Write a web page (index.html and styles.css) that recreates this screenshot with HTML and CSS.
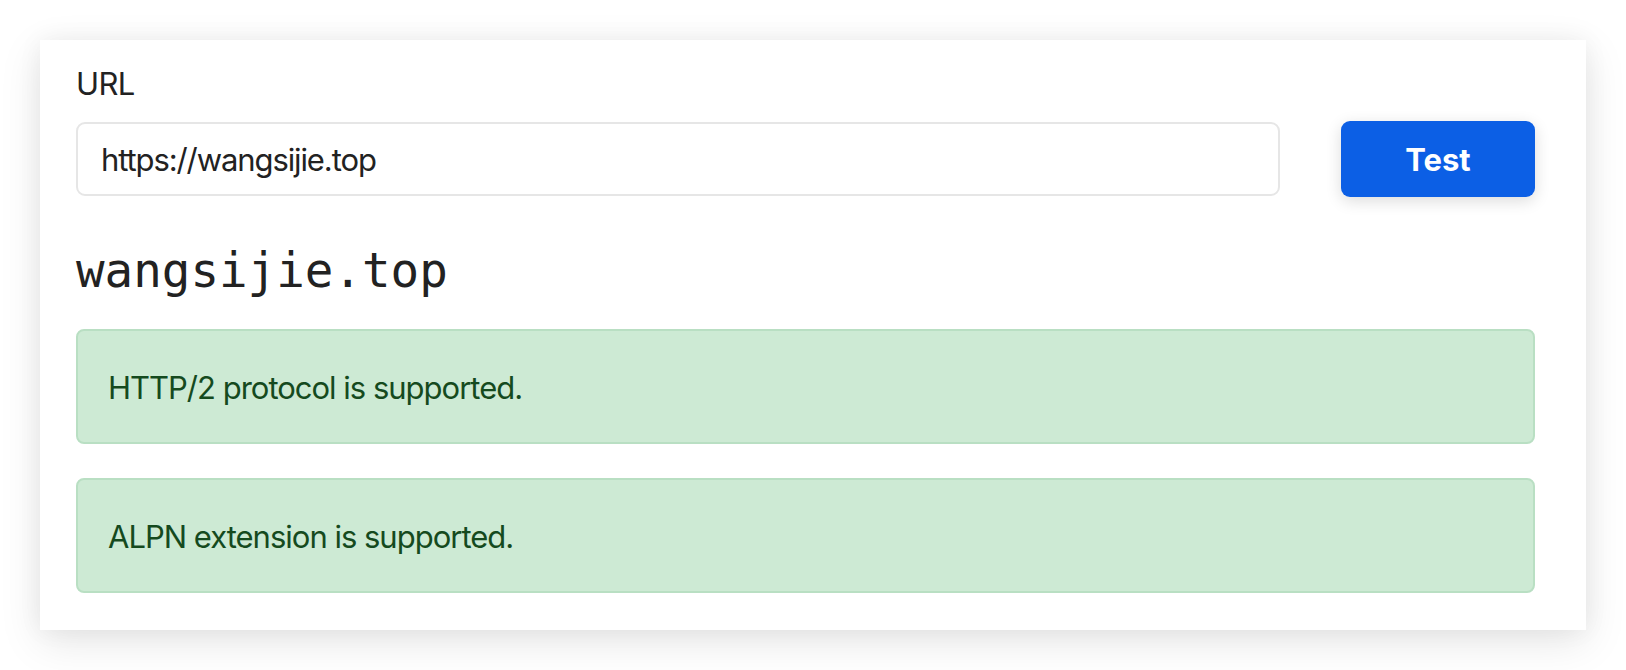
FILE: index.html
```html
<!DOCTYPE html>
<html lang="en">
<head>
<meta charset="utf-8">
<title>HTTP/2 Test</title>
<link rel="stylesheet" href="styles.css">
</head>
<body>
  <main class="card">
    <label class="label" for="url">URL</label>
    <div class="form-row">
      <input id="url" class="input" type="text" value="https://wangsijie.top">
      <button class="btn" type="button">Test</button>
    </div>
    <h3 class="host">wangsijie.top</h3>
    <div class="alert">HTTP/2 protocol is supported.</div>
    <div class="alert">ALPN extension is supported.</div>
  </main>
</body>
</html>
```

FILE: styles.css
```css
html, body {
  margin: 0;
  padding: 0;
  background: #ffffff;
}

body {
  padding: 40px;
  font-family: Inter, "Noto Sans", "Liberation Sans", sans-serif;
  color: #222222;
}

.card {
  width: 1546px;
  height: 590px;
  box-sizing: border-box;
  background: #ffffff;
  padding: 20px 51px 0 36px;
  box-shadow: 0 12px 40px rgba(0, 0, 0, 0.10), 0 0 24px rgba(0, 0, 0, 0.05);
}

.label {
  display: block;
  font-size: 31px;
  line-height: 48px;
  letter-spacing: -0.6px;
  color: #222222;
}

.form-row {
  display: flex;
  align-items: center;
  gap: 61px;
  margin-top: 13px;
}

.input {
  flex: 1;
  height: 74px;
  box-sizing: border-box;
  border: 2px solid #e6e6e6;
  border-radius: 9px;
  padding: 0 23px;
  font-family: Inter, "Noto Sans", "Liberation Sans", sans-serif;
  font-size: 31px;
  letter-spacing: -1.1px;
  color: #222222;
  background: #ffffff;
  outline: none;
}

.btn {
  width: 194px;
  height: 76px;
  border: none;
  border-radius: 9px;
  background: #0c5fe5;
  color: #ffffff;
  font-family: Inter, "Noto Sans", "Liberation Sans", sans-serif;
  font-weight: 700;
  font-size: 31px;
  box-shadow: 0 4px 16px rgba(0, 0, 0, 0.14);
}

.host {
  margin: 45px 0 30px;
  font-family: "DejaVu Sans Mono", monospace;
  font-weight: 400;
  font-size: 47.5px;
  line-height: 57px;
  color: #222222;
}

.alert {
  box-sizing: border-box;
  height: 115px;
  padding: 33px 32px 0 30px;
  border: 2px solid #b9dfc3;
  border-radius: 8px;
  background: #cdead4;
  color: #154a1e;
  font-size: 31px;
  line-height: 48px;
  letter-spacing: -1px;
}

.alert + .alert {
  margin-top: 34px;
}
```
